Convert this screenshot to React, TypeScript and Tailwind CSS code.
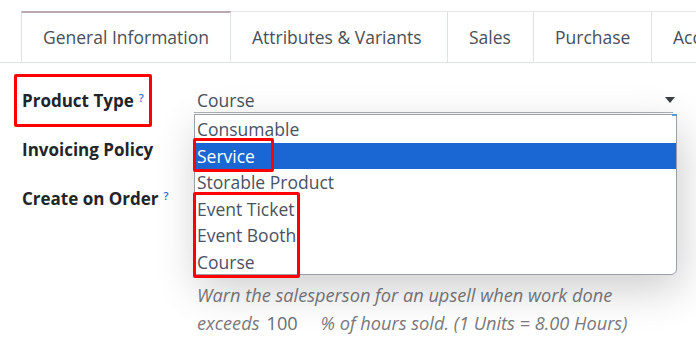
import React from 'react';

const tabs = [
  { label: 'General Information', w: 'w-[210px]' },
  { label: 'Attributes & Variants', w: 'w-[217px]' },
  { label: 'Sales', w: 'w-[86px]' },
  { label: 'Purchase', w: 'w-[118px]' },
  { label: 'Accounting', w: 'w-[140px]' },
];
const options = ['Consumable', 'Service', 'Storable Product', 'Event Ticket', 'Event Booth', 'Course'];

const Help: React.FC = () => (
  <sup className="ml-[5px] text-[11px] font-semibold text-[#1f6fc5] relative -top-[5px]">?</sup>
);

const App: React.FC = () => {
  return (
    <div
      className="relative w-[696px] h-[342px] overflow-hidden bg-white"
      style={{ fontFamily: '"Open Sans", "Noto Sans", sans-serif' }}
    >
      {/* tabs */}
      <div className="pt-[11px] flex border-b border-[#dee2e6]">
        <div className="w-[21px] shrink-0" />
        {tabs.map((t, i) => (
          <div
            key={t.label}
            className={
              i === 0
                ? `${t.w} shrink-0 h-[51px] -mb-px flex items-center justify-center bg-white border-t-2 border-t-[#b9a9b3] border-x border-x-[#dee2e6] border-b border-b-white text-[17.5px] text-[#4a4f57] whitespace-nowrap`
                : `${t.w} shrink-0 h-[51px] pl-[21px] flex items-center border-t border-t-[#e4e6e9] border-r border-r-[#dee2e6] text-[17.5px] text-[#4a4f57] whitespace-nowrap`
            }
          >
            {t.label}
          </div>
        ))}
      </div>

      {/* form */}
      <div className="grid grid-cols-[175px_1fr] pl-[22px] pr-[19px] mt-[13px]">
        <div className="h-[49px] flex items-center">
          <span className="relative text-[17px] font-bold text-[#212529] whitespace-nowrap">
            Product Type
            <Help />
            <span className="absolute -left-[8px] -right-[8px] -top-[14px] -bottom-[14px] border-[3px] border-[#f00] rounded-[2px]" />
          </span>
        </div>
        <div className="relative h-[49px] flex items-center">
          <span className="text-[17.5px] text-[#4a5262]">Course</span>
          <span className="absolute right-[2px] top-[21px] w-0 h-0 border-x-[5px] border-x-transparent border-t-[6px] border-t-[#3a3f48]" />
          <span className="absolute left-[-3px] right-[4px] top-[36px] h-px bg-[#adb1b8]" />
        </div>

        <div className="h-[49px] flex items-center">
          <span className="text-[17px] font-bold text-[#212529]">Invoicing Policy</span>
        </div>
        <div className="h-[49px]" />

        <div className="h-[49px] flex items-center">
          <span className="text-[17px] font-bold text-[#212529] whitespace-nowrap">
            Create on Order
            <Help />
          </span>
        </div>
        <div className="h-[49px]" />

        <div />
        <div className="mt-[58px] text-[18.2px] leading-[28px] italic text-[#7a7a80] whitespace-nowrap">
          <div>Warn the salesperson for an upsell when work done</div>
          <div>
            exceeds<span className="not-italic text-[#6b6f76] inline-block w-[54px] ml-[7px]">100</span>% of hours sold. (1 Units = 8.00 Hours)
          </div>
        </div>
      </div>

      {/* open dropdown */}
      <div className="absolute left-[194px] top-[114px] w-[483px] h-[161px] bg-white border border-[#9aa0a6] rounded-br-[6px] shadow-[4px_14px_44px_rgba(0,0,0,0.2)] pt-[1px]">
        <span className="absolute right-[-1px] top-[-1px] w-[5px] h-[2px] bg-[#5b9bd5]" />
        {options.map((o) => (
          <div
            key={o}
            className={
              o === 'Service'
                ? 'h-[26.5px] flex items-center pl-[2px] bg-[#1a66d2] text-white text-[17.5px]'
                : 'h-[26.5px] flex items-center pl-[2px] text-[#4a5262] text-[17.5px]'
            }
          >
            {o}
          </div>
        ))}
      </div>

      {/* annotation boxes */}
      <div className="absolute left-[193px] top-[138px] w-[81px] h-[34px] border-[3px] border-[#f00] rounded-[2px]" />
      <div className="absolute left-[193px] top-[192px] w-[107px] h-[86px] border-[3px] border-[#f00] rounded-[2px]" />
    </div>
  );
};

export default App;
